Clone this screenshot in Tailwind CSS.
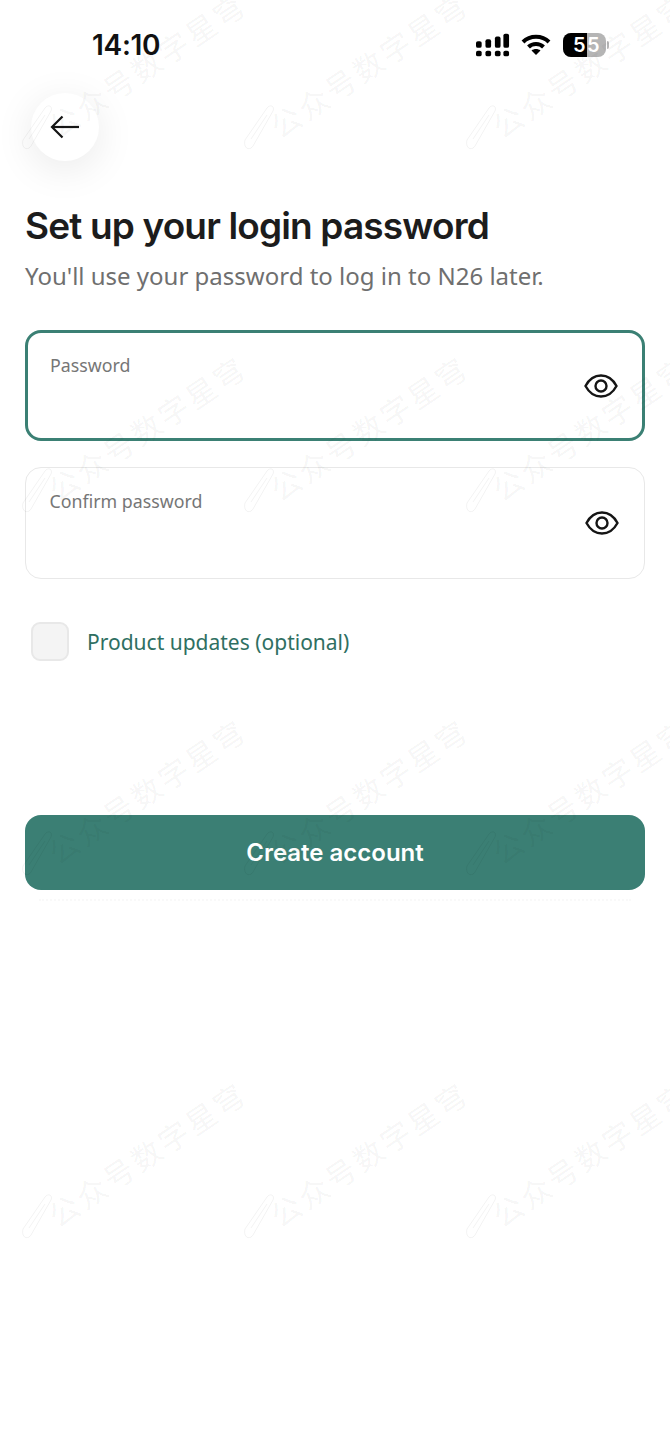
<!DOCTYPE html>
<html><head><meta charset="utf-8"><script src="https://cdn.jsdelivr.net/npm/@tailwindcss/browser@4"></script></head>
<body class="bg-white">
<div class="relative w-[670px] h-[1453px] overflow-hidden bg-white font-['Inter','Noto_Sans_CJK_SC',sans-serif]">
  <div class="flex h-[90px] items-center">
    <div class="w-[92px]"></div>
    <div class="text-[28px] leading-[34px] font-semibold text-[#111] tracking-[-0.3px] w-[384px]">14:10</div>
    <svg width="34" height="24" viewBox="0 0 36 24" fill="#000"><rect x="0" y="8" width="6" height="7" rx="2"/><rect x="10" y="6" width="6" height="9" rx="2"/><rect x="20" y="3" width="6" height="12" rx="2"/><rect x="29" y="0" width="6" height="15" rx="2"/><rect x="0" y="18" width="6" height="6" rx="2"/><rect x="10" y="18" width="6" height="6" rx="2"/><rect x="20" y="18" width="6" height="6" rx="2"/><rect x="29" y="18" width="6" height="6" rx="2"/></svg>
    <svg width="30" height="22" viewBox="0 0 30 22" class="ml-[11px]" fill="none" stroke="#000" stroke-width="4"><path d="M2 8C9 1 21 1 28 8"/><path d="M7.500 13C11.500 9 18.500 9 22.500 13"/><path d="M15 21l-4.500-4.500C13 14.500 17 14.500 19.500 16.500z" fill="#000" stroke="none"/></svg>
    <div class="ml-[12px] flex items-center">
      <div class="relative w-[43px] h-[24px] rounded-[8px] bg-[#b5b5b5] overflow-hidden flex text-white text-[20px] leading-[24px] font-semibold">
        <div class="w-[24px] bg-black pl-[10px]">5</div><div>5</div>
      </div>
      <div class="ml-[1px] w-[2px] h-[8px] rounded-r bg-[#b5b5b5]"></div>
    </div>
  </div>
  <div class="px-[25px]">
    <div class="ml-[6px] mt-[3px] w-[68px] h-[68px] rounded-full bg-white shadow-[0_8px_40px_rgba(0,0,0,0.09)] flex items-center justify-center">
      <svg width="30" height="24" viewBox="0 0 30 24" fill="none" stroke="#151515" stroke-width="2.200"><path d="M29 12H2"/><path d="M12.500 1.500L2 12l10.500 10.500"/></svg>
    </div>
    <h1 class="mt-[41px] text-[37px] leading-[48px] font-semibold tracking-[-0.85px] text-[#1c1c1c]">Set up your login password</h1>
    <p class="mt-[9px] text-[24px] leading-[34px] text-[#6f6f6f] font-['Noto_Sans',sans-serif]">You'll use your password to log in to N26 later.</p>
    <div class="mt-[37px] h-[111px] rounded-[16px] border-[3px] border-[#3b8074] pl-[22px] pr-[24px] flex justify-between">
      <div class="pt-[20px] text-[17.800px] leading-[24px] text-[#767676] font-['Noto_Sans',sans-serif]">Password</div>
      <svg width="34" height="24" viewBox="0 0 34 24" fill="none" stroke="#151515" stroke-width="2.400" class="self-center"><path d="M1.500 12C5 5.500 10.500 1.500 17 1.500S29 5.500 32.500 12C29 18.500 23.500 22.500 17 22.500S5 18.500 1.500 12z"/><circle cx="17" cy="12" r="5.500"/></svg>
    </div>
    <div class="mt-[26px] h-[112px] rounded-[16px] border-[1.500px] border-[#e8e8e8] pl-[23.500px] pr-[25.500px] flex justify-between">
      <div class="pt-[21px] text-[17.800px] leading-[24px] text-[#767676] font-['Noto_Sans',sans-serif]">Confirm password</div>
      <svg width="34" height="24" viewBox="0 0 34 24" fill="none" stroke="#151515" stroke-width="2.400" class="self-center"><path d="M1.500 12C5 5.500 10.500 1.500 17 1.500S29 5.500 32.500 12C29 18.500 23.500 22.500 17 22.500S5 18.500 1.500 12z"/><circle cx="17" cy="12" r="5.500"/></svg>
    </div>
    <div class="mt-[43px] ml-[6px] flex items-center gap-[18px]">
      <div class="w-[38px] h-[39px] rounded-[9px] bg-[#f4f4f4] border-2 border-[#e8e8e8]"></div>
      <span class="text-[21px] leading-[30px] text-[#2f6f62] font-['Noto_Sans',sans-serif]">Product updates (optional)</span>
    </div>
    <button class="mt-[154px] w-[620px] h-[75px] rounded-[16px] bg-[#3b7f74] text-white text-[24px] font-semibold">Create account</button>
    <div class="mt-[9px] mx-[14px] border-t-2 border-dotted border-black/[0.025]"></div>
  </div>

  <div class="absolute left-0 top-[4px] pointer-events-none grid grid-cols-[222px_222px_222px_222px] auto-rows-[363px] text-black/[0.05]">
    <div class="relative"><svg class="absolute left-[20px] top-[98px]" width="34" height="50" viewBox="0 0 34 50" fill="none" stroke="currentColor" stroke-width="1"><path d="M3 38L25 6c3-4 8-2 6 3L11 44c-3 5-10 3-8-6z"/><path d="M9 37L25 13"/></svg><span class="absolute left-[31px] top-[40px] w-[232px] -rotate-[34deg] text-[30px] leading-[40px] tracking-[3px] whitespace-nowrap font-['Noto_Sans_CJK_SC',sans-serif]">公众号数字星穹</span></div>
    <div class="relative"><svg class="absolute left-[20px] top-[98px]" width="34" height="50" viewBox="0 0 34 50" fill="none" stroke="currentColor" stroke-width="1"><path d="M3 38L25 6c3-4 8-2 6 3L11 44c-3 5-10 3-8-6z"/><path d="M9 37L25 13"/></svg><span class="absolute left-[31px] top-[40px] w-[232px] -rotate-[34deg] text-[30px] leading-[40px] tracking-[3px] whitespace-nowrap font-['Noto_Sans_CJK_SC',sans-serif]">公众号数字星穹</span></div>
    <div class="relative"><svg class="absolute left-[20px] top-[98px]" width="34" height="50" viewBox="0 0 34 50" fill="none" stroke="currentColor" stroke-width="1"><path d="M3 38L25 6c3-4 8-2 6 3L11 44c-3 5-10 3-8-6z"/><path d="M9 37L25 13"/></svg><span class="absolute left-[31px] top-[40px] w-[232px] -rotate-[34deg] text-[30px] leading-[40px] tracking-[3px] whitespace-nowrap font-['Noto_Sans_CJK_SC',sans-serif]">公众号数字星穹</span></div>
    <div></div>
    <div class="relative"><svg class="absolute left-[20px] top-[98px]" width="34" height="50" viewBox="0 0 34 50" fill="none" stroke="currentColor" stroke-width="1"><path d="M3 38L25 6c3-4 8-2 6 3L11 44c-3 5-10 3-8-6z"/><path d="M9 37L25 13"/></svg><span class="absolute left-[31px] top-[40px] w-[232px] -rotate-[34deg] text-[30px] leading-[40px] tracking-[3px] whitespace-nowrap font-['Noto_Sans_CJK_SC',sans-serif]">公众号数字星穹</span></div>
    <div class="relative"><svg class="absolute left-[20px] top-[98px]" width="34" height="50" viewBox="0 0 34 50" fill="none" stroke="currentColor" stroke-width="1"><path d="M3 38L25 6c3-4 8-2 6 3L11 44c-3 5-10 3-8-6z"/><path d="M9 37L25 13"/></svg><span class="absolute left-[31px] top-[40px] w-[232px] -rotate-[34deg] text-[30px] leading-[40px] tracking-[3px] whitespace-nowrap font-['Noto_Sans_CJK_SC',sans-serif]">公众号数字星穹</span></div>
    <div class="relative"><svg class="absolute left-[20px] top-[98px]" width="34" height="50" viewBox="0 0 34 50" fill="none" stroke="currentColor" stroke-width="1"><path d="M3 38L25 6c3-4 8-2 6 3L11 44c-3 5-10 3-8-6z"/><path d="M9 37L25 13"/></svg><span class="absolute left-[31px] top-[40px] w-[232px] -rotate-[34deg] text-[30px] leading-[40px] tracking-[3px] whitespace-nowrap font-['Noto_Sans_CJK_SC',sans-serif]">公众号数字星穹</span></div>
    <div></div>
    <div class="relative"><svg class="absolute left-[20px] top-[98px]" width="34" height="50" viewBox="0 0 34 50" fill="none" stroke="currentColor" stroke-width="1"><path d="M3 38L25 6c3-4 8-2 6 3L11 44c-3 5-10 3-8-6z"/><path d="M9 37L25 13"/></svg><span class="absolute left-[31px] top-[40px] w-[232px] -rotate-[34deg] text-[30px] leading-[40px] tracking-[3px] whitespace-nowrap font-['Noto_Sans_CJK_SC',sans-serif]">公众号数字星穹</span></div>
    <div class="relative"><svg class="absolute left-[20px] top-[98px]" width="34" height="50" viewBox="0 0 34 50" fill="none" stroke="currentColor" stroke-width="1"><path d="M3 38L25 6c3-4 8-2 6 3L11 44c-3 5-10 3-8-6z"/><path d="M9 37L25 13"/></svg><span class="absolute left-[31px] top-[40px] w-[232px] -rotate-[34deg] text-[30px] leading-[40px] tracking-[3px] whitespace-nowrap font-['Noto_Sans_CJK_SC',sans-serif]">公众号数字星穹</span></div>
    <div class="relative"><svg class="absolute left-[20px] top-[98px]" width="34" height="50" viewBox="0 0 34 50" fill="none" stroke="currentColor" stroke-width="1"><path d="M3 38L25 6c3-4 8-2 6 3L11 44c-3 5-10 3-8-6z"/><path d="M9 37L25 13"/></svg><span class="absolute left-[31px] top-[40px] w-[232px] -rotate-[34deg] text-[30px] leading-[40px] tracking-[3px] whitespace-nowrap font-['Noto_Sans_CJK_SC',sans-serif]">公众号数字星穹</span></div>
    <div></div>
    <div class="relative"><svg class="absolute left-[20px] top-[98px]" width="34" height="50" viewBox="0 0 34 50" fill="none" stroke="currentColor" stroke-width="1"><path d="M3 38L25 6c3-4 8-2 6 3L11 44c-3 5-10 3-8-6z"/><path d="M9 37L25 13"/></svg><span class="absolute left-[31px] top-[40px] w-[232px] -rotate-[34deg] text-[30px] leading-[40px] tracking-[3px] whitespace-nowrap font-['Noto_Sans_CJK_SC',sans-serif]">公众号数字星穹</span></div>
    <div class="relative"><svg class="absolute left-[20px] top-[98px]" width="34" height="50" viewBox="0 0 34 50" fill="none" stroke="currentColor" stroke-width="1"><path d="M3 38L25 6c3-4 8-2 6 3L11 44c-3 5-10 3-8-6z"/><path d="M9 37L25 13"/></svg><span class="absolute left-[31px] top-[40px] w-[232px] -rotate-[34deg] text-[30px] leading-[40px] tracking-[3px] whitespace-nowrap font-['Noto_Sans_CJK_SC',sans-serif]">公众号数字星穹</span></div>
    <div class="relative"><svg class="absolute left-[20px] top-[98px]" width="34" height="50" viewBox="0 0 34 50" fill="none" stroke="currentColor" stroke-width="1"><path d="M3 38L25 6c3-4 8-2 6 3L11 44c-3 5-10 3-8-6z"/><path d="M9 37L25 13"/></svg><span class="absolute left-[31px] top-[40px] w-[232px] -rotate-[34deg] text-[30px] leading-[40px] tracking-[3px] whitespace-nowrap font-['Noto_Sans_CJK_SC',sans-serif]">公众号数字星穹</span></div>
    <div></div>
  </div>
</div>
</body></html>
